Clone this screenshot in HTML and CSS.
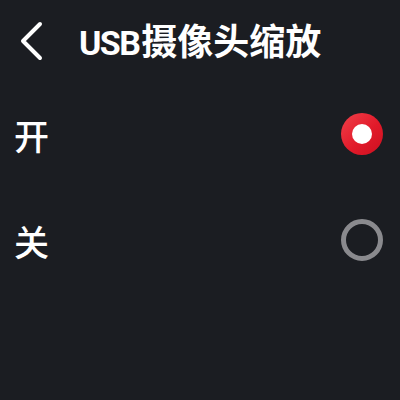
FILE: index.html
```html
<!DOCTYPE html>
<html lang="zh-CN">
<head>
<meta charset="utf-8">
<link rel="stylesheet" href="styles.css">
</head>
<body>
<div class="screen">
  <header class="header">
    <svg class="back" width="26" height="40" viewBox="0 0 26 40">
      <path d="M20 3 L3 20 L20 37" fill="none" stroke="#ffffff" stroke-width="4" stroke-linecap="round" stroke-linejoin="round"/>
    </svg>
    <h1 class="title"><span class="latin">USB</span>摄像头缩放</h1>
  </header>
  <div class="row">
    <span class="label">开</span>
    <span class="radio radio-on"><span class="dot"></span></span>
  </div>
  <div class="row">
    <span class="label">关</span>
    <span class="radio radio-off"></span>
  </div>
</div>
</body>
</html>
```
FILE: styles.css
```css
html, body {
  margin: 0;
  padding: 0;
  background: #1b1d22;
}
body {
  width: 400px;
  height: 400px;
  overflow: hidden;
  font-family: Roboto, "Noto Sans CJK SC", sans-serif;
  color: #ffffff;
}
.header {
  height: 81px;
  display: flex;
  align-items: center;
  padding-left: 20px;
}
.back {
  display: block;
  flex: none;
}
.title {
  margin: 0 0 0 33px;
  font-family: "Noto Sans CJK SC", sans-serif;
  font-size: 36px;
  font-weight: 700;
  line-height: 1;
  white-space: nowrap;
}
.latin {
  font-family: Roboto, sans-serif;
  font-size: 34px;
  letter-spacing: -1.6px;
  margin-right: 2px;
}
.row {
  height: 106px;
  display: flex;
  align-items: center;
  justify-content: space-between;
  padding: 0 17px 0 14px;
}
.label {
  font-family: "Noto Sans CJK SC", sans-serif;
  font-size: 35px;
  font-weight: 500;
  line-height: 1;
}
.radio {
  box-sizing: border-box;
  width: 42px;
  height: 42px;
  border-radius: 50%;
  display: flex;
  align-items: center;
  justify-content: center;
}
.radio-on {
  background: linear-gradient(135deg, #f0404a 0%, #e21a2a 55%, #cc1020 100%);
}
.dot {
  width: 20px;
  height: 20px;
  border-radius: 50%;
  background: #ffffff;
}
.radio-off {
  border: 5px solid #8a8a8e;
}
```
